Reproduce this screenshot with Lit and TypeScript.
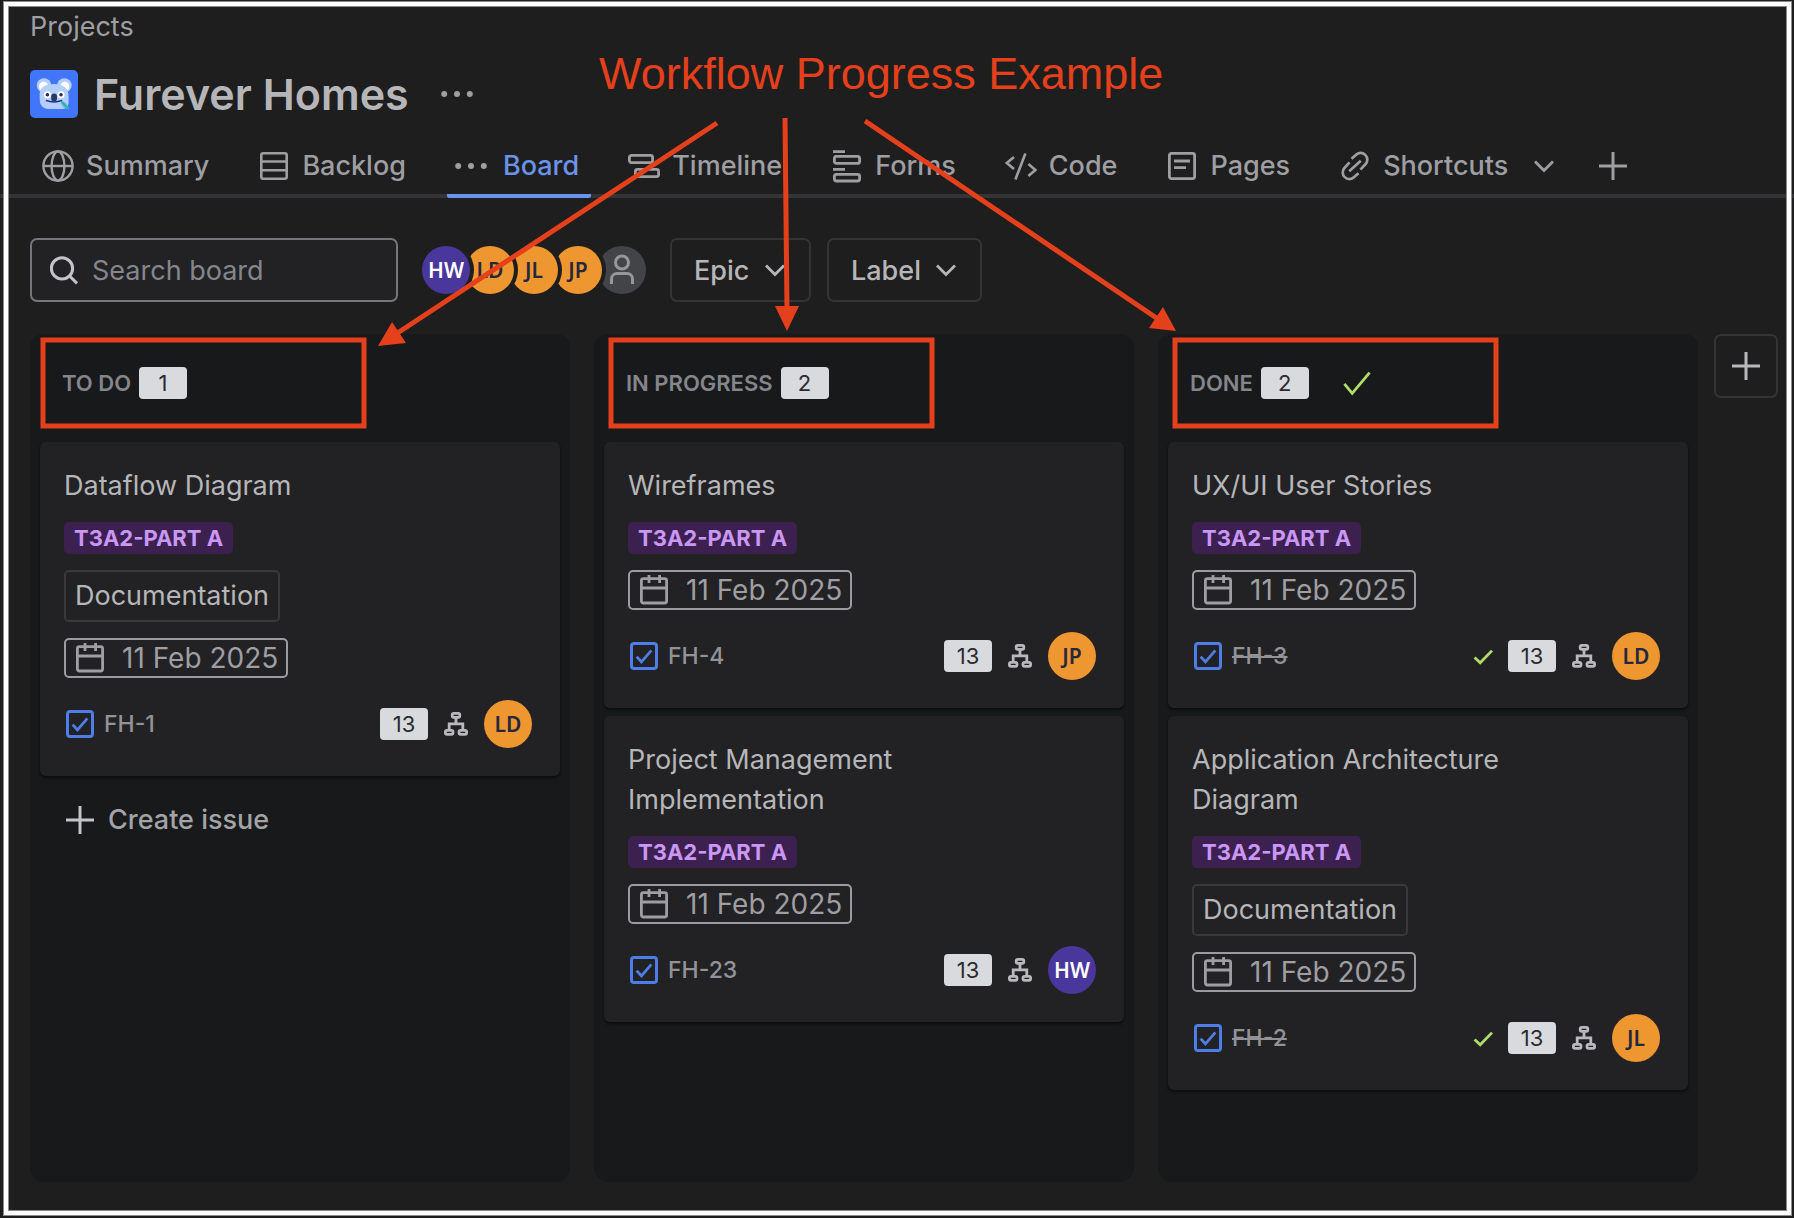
import { LitElement, html, svg, css, nothing, type TemplateResult } from "lit";
import { customElement, property } from "lit/decorators.js";
import { classMap } from "lit/directives/class-map.js";

interface Issue {
  key: string;
  title: string;
  label?: string;
  due: string;
  points: number;
  assignee: string;
  done?: boolean;
}

interface Column {
  name: string;
  issues: Issue[];
  canCreate?: boolean;
  done?: boolean;
}

const icon = (body: TemplateResult, size: number) => html`
  <svg width=${size} height=${size} viewBox="0 0 ${size} ${size}" fill="none" stroke="currentColor" aria-hidden="true">${body}</svg>
`;

const icons = {
  globe: icon(svg`<g stroke-width="2.4"><circle cx="16" cy="16" r="14.6"/><ellipse cx="16" cy="16" rx="6.4" ry="14.6"/><path d="M1.5 16h29"/></g>`, 32),
  backlog: icon(svg`<g stroke-width="2.6"><rect x="3.3" y="3.3" width="25.4" height="25.4" rx="2"/><path d="M3 11.5h26M3 20.3h26"/></g>`, 32),
  dots: icon(svg`<g fill="currentColor" stroke="none"><circle cx="3.2" cy="16" r="3"/><circle cx="16" cy="16" r="3"/><circle cx="28.8" cy="16" r="3"/></g>`, 32),
  timeline: icon(svg`<g stroke-width="2.8"><rect x="1.4" y="5.4" width="23.2" height="7.2" rx="2"/><rect x="7.4" y="19.4" width="23.2" height="7.2" rx="2"/></g>`, 32),
  forms: icon(svg`<g stroke-width="2.8"><path d="M2 1.6h12M2 19.4h12"/><rect x="3.4" y="6.4" width="25.2" height="7" rx="2"/><rect x="3.4" y="24.4" width="25.2" height="6.6" rx="2"/></g>`, 32),
  code: icon(svg`<g stroke-width="2.6"><path d="M9 7 1.8 13 9 19M20.4 3.5l-10 26M23.4 14 30.4 20l-7 6"/></g>`, 32),
  pages: icon(svg`<g stroke-width="2.8"><rect x="3.4" y="3.4" width="25.2" height="25.2" rx="2"/><path d="M8 11h16M8 17.6h12"/></g>`, 32),
  link: icon(svg`<g stroke-width="2.7"><path d="M12.5 8.8 16.800 5a6.600 6.600 0 0 1 9.600 9.300L21.400 19.600M19.500 23.200 15.200 27a6.600 6.600 0 0 1-9.600-9.300L10.600 12.400M10.200 21.200 21.800 10.800"/></g>`, 32),
  chevron: icon(svg`<path stroke-width="2.8" d="M3 7.5 12 16.500 21 7.500"/>`, 24),
  plus: icon(svg`<path stroke-width="3" d="M14 0v28M0 14h28"/>`, 28),
  search: icon(svg`<g stroke-width="3"><circle cx="12" cy="12.4" r="10.6"/><path d="m19.6 20 7.4 7.4"/></g>`, 28),
  person: icon(svg`<g stroke-width="3"><circle cx="14" cy="6.500" r="6.5"/><path d="M3.5 28v-5a5.5 5.5 0 0 1 5.5-5.5h10a5.5 5.5 0 0 1 5.5 5.500v5"/></g>`, 28),
  calendar: icon(svg`<g stroke-width="2.8"><rect x="1.4" y="2.600" width="25.2" height="24.4" rx="2"/><path d="M1.4 12h25.2M9-1v8M19.6-1v8"/></g>`, 28),
  task: icon(svg`<rect x="1.5" y="1.5" width="25" height="25" rx="2.5" stroke-width="3"/><path stroke-width="2.8" d="m6.6 14.6 4.8 5.2L21.4 8.4"/>`, 28),
  tree: icon(svg`<g stroke-width="2.8"><rect x="8.2" y="1.4" width="7.6" height="4" rx="1.6"/><rect x="1.4" y="18.4" width="7.6" height="4" rx="1.6"/><rect x="15" y="18.4" width="7.6" height="4" rx="1.6"/><path d="M12 5.6v6.2M5.200 18v-6.2h13.600V18"/></g>`, 24),
  tick: icon(svg`<path stroke-width="2.8" d="m2.6 11.4 5.6 5.4L20 4.6"/>`, 20),
  tickLarge: icon(svg`<path stroke-width="2.8" d="m1.4 14.8 7.8 9.6L26.6 3.6"/>`, 28),
  koala: html`
    <svg width="48" height="48" viewBox="0 0 48 48" role="img" aria-label="Furever Homes">
      <rect width="48" height="48" rx="5" fill="#4176fa" />
      <circle cx="14" cy="15.4" r="7.2" fill="#b3cdfd" />
      <circle cx="34.4" cy="15.4" r="7.2" fill="#b3cdfd" />
      <circle cx="13.6" cy="16.4" r="4.6" fill="#fff" />
      <circle cx="34.8" cy="16.4" r="4.6" fill="#fff" />
      <path d="M24 14c9 0 14.600 4 14.600 12.500V33a6 6 0 0 1-6 6H17.500a8 8 0 0 1-7.600-7.200L9.600 24C10 17 15.500 14 24 14Z" fill="#b3cdfd" />
      <circle cx="17.400" cy="24.800" r="3.500" fill="#fff" />
      <circle cx="31" cy="24.800" r="3.500" fill="#fff" />
      <circle cx="17.400" cy="24.800" r="1.800" fill="#1f2f5c" />
      <circle cx="31" cy="24.800" r="1.800" fill="#1f2f5c" />
      <rect x="21.200" y="23.400" width="5.800" height="8" rx="2.900" fill="#253a6b" />
      <path d="M16 30.600c5 1.800 11 1.800 16.200 0" fill="none" stroke="#253a6b" stroke-width="1.600" />
      <path d="M30.600 31c4.600.6 7.600 3.400 8.400 8.200-4.800-.2-7.600-3-8.400-8.200Z" fill="#4fc0c9" />
      <path d="m31 31.400 7.600 7.400" stroke="#1d7f8c" stroke-width=".8" />
    </svg>
  `,
};

const tabs: { name: string; glyph: TemplateResult; active?: boolean; menu?: boolean }[] = [
  { name: "Summary", glyph: icons.globe },
  { name: "Backlog", glyph: icons.backlog },
  { name: "Board", glyph: icons.dots, active: true },
  { name: "Timeline", glyph: icons.timeline },
  { name: "Forms", glyph: icons.forms },
  { name: "Code", glyph: icons.code },
  { name: "Pages", glyph: icons.pages },
  { name: "Shortcuts", glyph: icons.link, menu: true },
];

const columns: Column[] = [
  {
    name: "TO DO",
    canCreate: true,
    issues: [{ key: "FH-1", title: "Dataflow Diagram", label: "Documentation", due: "11 Feb 2025", points: 13, assignee: "LD" }],
  },
  {
    name: "IN PROGRESS",
    issues: [
      { key: "FH-4", title: "Wireframes", due: "11 Feb 2025", points: 13, assignee: "JP" },
      { key: "FH-23", title: "Project Management Implementation", due: "11 Feb 2025", points: 13, assignee: "HW" },
    ],
  },
  {
    name: "DONE",
    done: true,
    issues: [
      { key: "FH-3", title: "UX/UI User Stories", due: "11 Feb 2025", points: 13, assignee: "LD", done: true },
      { key: "FH-2", title: "Application Architecture Diagram", label: "Documentation", due: "11 Feb 2025", points: 13, assignee: "JL", done: true },
    ],
  },
];

const shared = css`
  * {
    box-sizing: border-box;
  }
  svg {
    display: block;
    flex: none;
    overflow: visible;
  }
  button,
  input,
  select {
    font: inherit;
    color: inherit;
    margin: 0;
  }
  .avatar {
    flex: none;
    display: grid;
    place-items: center;
    width: 48px;
    height: 48px;
    padding: 0;
    border: 0;
    border-radius: 50%;
    background: #ee9630;
    color: #25273c;
    font-family: "Noto Sans", "Open Sans", sans-serif;
    font-size: 21px;
    font-weight: 600;
    line-height: 24px;
  }
  .avatar.violet {
    background: #4a379c;
    color: #fff;
  }
  .count {
    flex: none;
    min-width: 48px;
    border-radius: 4px;
    background: #d9dade;
    color: #2a2b2f;
    font-size: 22px;
    line-height: 32px;
    text-align: center;
  }
`;

@customElement("issue-card")
class IssueCard extends LitElement {
  @property({ attribute: false }) issue!: Issue;

  static styles = [
    shared,
    css`
      :host {
        display: block;
      }
      .card {
        display: flex;
        flex-direction: column;
        align-items: flex-start;
        gap: 16px;
        padding: 24px 28px 28px 24px;
        border-radius: 6px;
        background: #222224;
        box-shadow: 0 2px 3px #0c0d0e;
      }
      .title {
        max-width: 360px;
        margin: 0;
        font-size: 27px;
        font-weight: 400;
        line-height: 40px;
        color: #b6b6b9;
      }
      .epic {
        padding: 0 10px;
        border-radius: 5px;
        background: #3c2150;
        color: #cb97f6;
        font-size: 22px;
        font-weight: 700;
        line-height: 32px;
      }
      .label {
        padding: 4px 9px;
        border: 2px solid #39393c;
        border-radius: 5px;
        font-size: 27px;
        line-height: 40px;
        color: #b6b6b9;
      }
      .due {
        display: flex;
        align-items: center;
        gap: 18px;
        padding: 0 8px 0 10px;
        border: 2px solid #9b9ba0;
        border-radius: 5px;
        font-size: 28px;
        line-height: 36px;
      }
      .foot {
        align-self: stretch;
        display: flex;
        align-items: center;
        gap: 16px;
        padding: 6px 0 0 2px;
      }
      .key {
        display: flex;
        align-items: center;
        gap: 10px;
        margin-right: auto;
        font-size: 23px;
        font-weight: 500;
        line-height: 32px;
        color: #929297;
        text-decoration: none;
      }
      .key svg {
        color: #4c7de8;
      }
      .struck {
        text-decoration: line-through;
      }
      .tick {
        color: #b0dc68;
      }
      .tree {
        color: #b9b9bd;
      }
    `,
  ];

  render() {
    const i = this.issue;
    return html`
      <article class="card">
        <h3 class="title">${i.title}</h3>
        <span class="epic">T3A2-PART A</span>
        ${i.label ? html`<span class="label">${i.label}</span>` : nothing}
        <time class="due" datetime="2025-02-11">${icons.calendar}${i.due}</time>
        <div class="foot">
          <a class="key" href="#${i.key}">${icons.task}<span class=${classMap({ struck: !!i.done })}>${i.key}</span></a>
          ${i.done ? html`<span class="tick">${icons.tick}</span>` : nothing}
          <span class="count">${i.points}</span>
          <span class="tree">${icons.tree}</span>
          <span class=${classMap({ avatar: true, violet: i.assignee === "HW" })}>${i.assignee}</span>
        </div>
      </article>
    `;
  }
}

@customElement("board-column")
class BoardColumn extends LitElement {
  @property({ attribute: false }) column!: Column;

  static styles = [
    shared,
    css`
      :host {
        display: block;
        flex: 1 1 0;
        min-width: 0;
      }
      .column {
        height: 100%;
        padding: 0 10px 10px;
        border-radius: 14px;
        background: #18191a;
      }
      .head {
        display: flex;
        align-items: center;
        gap: 8px;
        height: 108px;
        padding: 0 22px 10px;
      }
      .name {
        margin: 0;
        font-size: 22px;
        font-weight: 600;
        line-height: 32px;
        color: #85868c;
        white-space: nowrap;
      }
      .complete {
        margin-left: 26px;
        color: #b0dc68;
      }
      .cards {
        display: flex;
        flex-direction: column;
        gap: 8px;
        margin: 0;
        padding: 0;
        list-style: none;
      }
      .create {
        display: flex;
        align-items: center;
        gap: 14px;
        width: 100%;
        padding: 24px 26px;
        border: 0;
        background: none;
        font-size: 27px;
        font-weight: 500;
        line-height: 40px;
        color: #a3a3a7;
      }
      .create svg {
        color: #c4c4c8;
      }
    `,
  ];

  render() {
    const c = this.column;
    return html`
      <section class="column" aria-label=${c.name}>
        <header class="head">
          <h2 class="name">${c.name}</h2>
          <span class="count">${c.issues.length}</span>
          ${c.done ? html`<span class="complete">${icons.tickLarge}</span>` : nothing}
        </header>
        <ul class="cards">
          ${c.issues.map((i) => html`<li><issue-card .issue=${i}></issue-card></li>`)}
        </ul>
        ${c.canCreate ? html`<button class="create" type="button">${icons.plus}Create issue</button>` : nothing}
      </section>
    `;
  }
}

@customElement("app-root")
class AppRoot extends LitElement {
  static styles = [
    shared,
    css`
      :host {
        display: block;
        font-family: Inter, "Liberation Sans", sans-serif;
        color: #9e9ea3;
        background: #1e1e1e;
      }
      .page {
        position: relative;
        display: flex;
        flex-direction: column;
        min-height: 100vh;
        padding-bottom: 36px;
        overflow: hidden;
      }
      .crumb {
        align-self: flex-start;
        margin: 7px 0 0 30px;
        font-size: 27px;
        line-height: 40px;
        color: inherit;
        text-decoration: none;
      }
      .heading {
        display: flex;
        align-items: center;
        gap: 16px;
        margin: 19px 0 0 30px;
        height: 56px;
      }
      .title {
        margin: 0;
        font-size: 43px;
        font-weight: 600;
        line-height: 56px;
        color: #b6b6ba;
      }
      .more,
      .add {
        display: grid;
        place-items: center;
        padding: 0;
        border: 0;
        background: none;
      }
      .more {
        margin-left: 16px;
      }
      .tabs {
        display: flex;
        align-items: center;
        gap: 29px;
        margin-top: 12px;
        padding: 0 34px;
        height: 64px;
        border-bottom: 4px solid #343436;
      }
      .tab {
        display: flex;
        align-items: center;
        gap: 12px;
        height: 64px;
        padding: 4px 12px 0 8px;
        margin-bottom: -4px;
        border-bottom: 4px solid transparent;
        font-size: 27px;
        font-weight: 500;
        line-height: 40px;
        color: inherit;
        text-decoration: none;
      }
      .tab.active {
        gap: 16px;
        border-color: #6a93ec;
        border-radius: 2px;
      }
      .tab.active span {
        color: #6a93ec;
      }
      .tab.menu {
        padding-right: 0;
      }
      .tab.menu svg:last-child {
        margin-left: 12px;
      }
      .add {
        align-self: stretch;
        margin-left: 14px;
        padding-top: 4px;
      }
      .filters {
        display: flex;
        align-items: center;
        gap: 16px;
        padding: 40px 30px 32px;
      }
      .search {
        display: flex;
        align-items: center;
        gap: 14px;
        width: 368px;
        height: 64px;
        padding: 0 18px;
        border: 2px solid #74757d;
        border-radius: 7px;
        background: #222224;
        font-size: 27px;
        color: #c4c4c8;
      }
      .search input {
        flex: 1;
        min-width: 0;
        padding: 0;
        border: 0;
        outline: 0;
        background: none;
      }
      .search input::placeholder {
        color: #85868c;
        opacity: 1;
      }
      .people {
        display: flex;
        isolation: isolate;
        padding: 0 8px;
      }
      .people .avatar {
        position: relative;
        box-shadow: 0 0 0 4px #1e1e1e;
      }
      .people .avatar + .avatar {
        margin-left: -4px;
      }
      .avatar.nobody {
        background: #434448;
        color: #96979c;
      }
      .filter {
        display: grid;
        align-items: center;
        font-size: 27px;
        font-weight: 500;
        color: #b6b6ba;
      }
      .filter select,
      .filter svg {
        grid-area: 1 / 1;
      }
      .filter select {
        appearance: none;
        height: 64px;
        padding: 0 59px 0 22px;
        border: 2px solid #343436;
        border-radius: 7px;
        background: none;
      }
      .filter svg {
        justify-self: end;
        margin-right: 24px;
        pointer-events: none;
      }
      .board {
        flex: 1;
        display: flex;
        align-items: stretch;
        gap: 24px;
        padding: 0 16px 0 30px;
      }
      .new-column {
        flex: none;
        display: grid;
        place-items: center;
        width: 64px;
        height: 64px;
        margin-left: -8px;
        padding: 0;
        border: 2px solid #343436;
        border-radius: 7px;
        background: none;
        color: #b9b9bd;
      }
      .frame {
        position: absolute;
        inset: 2px 3px 3px 4px;
        border: 4px solid #fff;
        box-shadow: 0 0 0 1px #8c8c8c, inset 0 0 0 1px #8c8c8c;
        pointer-events: none;
      }
      .notes {
        position: absolute;
        top: 0;
        left: 0;
        width: 1794px;
        height: 450px;
        color: #e5401c;
        pointer-events: none;
      }
      .caption {
        position: absolute;
        top: 48px;
        left: 599px;
        margin: 0;
        font-family: "Liberation Sans", Arial, sans-serif;
        font-size: 45px;
        line-height: 52px;
        color: #e5401c;
        white-space: nowrap;
      }
    `,
  ];

  render() {
    return html`
      <main class="page">
        <a class="crumb" href="#projects">Projects</a>
        <div class="heading">
          ${icons.koala}
          <h1 class="title">Furever Homes</h1>
          <button class="more" type="button" aria-label="More actions">${icons.dots}</button>
        </div>
        <nav class="tabs">
          ${tabs.map(
            (t) => html`
              <a class=${classMap({ tab: true, active: !!t.active, menu: !!t.menu })} href="#${t.name}">
                ${t.glyph}<span>${t.name}</span>${t.menu ? icons.chevron : nothing}
              </a>
            `,
          )}
          <button class="add" type="button" aria-label="Add view">${icons.plus}</button>
        </nav>
        <div class="filters">
          <label class="search">
            ${icons.search}
            <input type="search" placeholder="Search board" aria-label="Search board" />
          </label>
          <div class="people">
            ${["HW", "LD", "JL", "JP"].map(
              (p, n) => html`
                <button class=${classMap({ avatar: true, violet: p === "HW" })} style="z-index: ${5 - n}" type="button">${p}</button>
              `,
            )}
            <button class="avatar nobody" type="button" aria-label="Unassigned">${icons.person}</button>
          </div>
          ${["Epic", "Label"].map(
            (f) => html`
              <label class="filter">
                <select aria-label=${f}><option>${f}</option></select>
                ${icons.chevron}
              </label>
            `,
          )}
        </div>
        <div class="board">
          ${columns.map((c) => html`<board-column .column=${c}></board-column>`)}
          <button class="new-column" type="button" aria-label="Add column">${icons.plus}</button>
        </div>
        <div class="frame"></div>
        <svg class="notes" viewBox="0 0 1794 450" fill="none" stroke="currentColor" stroke-width="5" aria-hidden="true">
          <path d="M717 123 396 334M785 118l2 192M865 121l293 198" />
          <g fill="currentColor" stroke="none">
            <path d="m378 346 14-24 14 21ZM787 331l-12-25h24ZM1176 331l-27-3 14-21Z" />
          </g>
          <rect x="43" y="340" width="321" height="86" />
          <rect x="611" y="340" width="321" height="86" />
          <rect x="1175" y="340" width="321" height="86" />
        </svg>
        <p class="caption">Workflow Progress Example</p>
      </main>
    `;
  }
}
